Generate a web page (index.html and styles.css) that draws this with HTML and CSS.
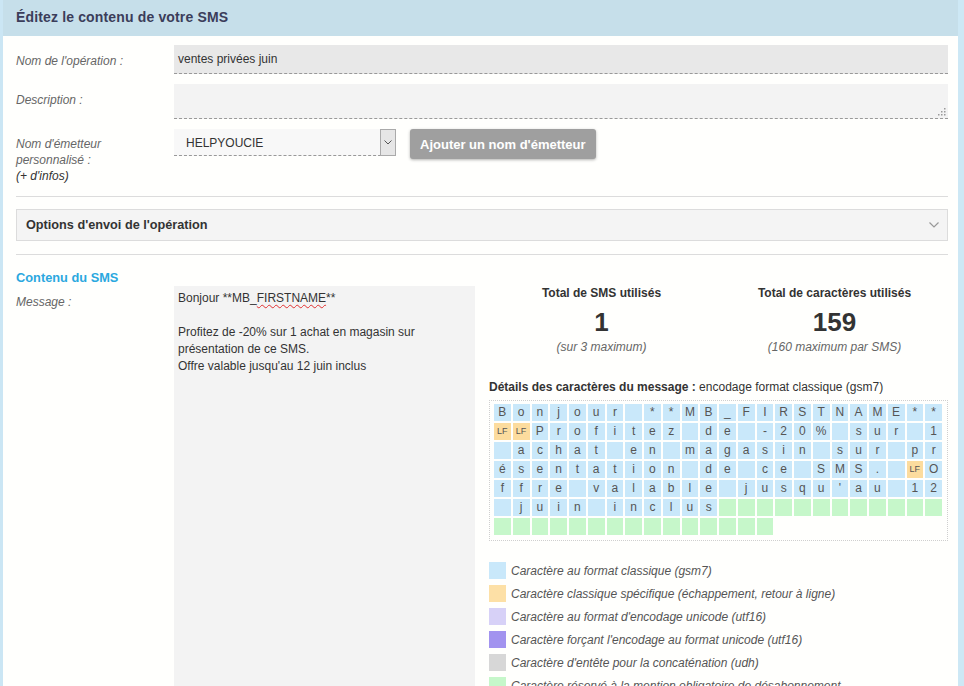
FILE: index.html
```html
<!DOCTYPE html>
<html lang="fr">
<head>
<meta charset="utf-8">
<title>Éditez le contenu de votre SMS</title>
<link rel="stylesheet" href="styles.css">
</head>
<body>
<div class="panel">
  <div class="panel-head">Éditez le contenu de votre SMS</div>
  <div class="panel-body">
    <div class="form-row">
      <div class="lbl">Nom de l'opération :</div>
      <div class="fld input">ventes privées juin</div>
    </div>
    <div class="form-row">
      <div class="lbl">Description :</div>
      <div class="fld textarea">
        <svg class="grip" width="8" height="8" viewBox="0 0 8 8"><g fill="#9a9a9a"><rect x="6" y="0" width="1.5" height="1.5"/><rect x="3" y="3" width="1.5" height="1.5"/><rect x="6" y="3" width="1.5" height="1.5"/><rect x="0" y="6" width="1.5" height="1.5"/><rect x="3" y="6" width="1.5" height="1.5"/><rect x="6" y="6" width="1.5" height="1.5"/></g></svg>
      </div>
    </div>
    <div class="form-row">
      <div class="lbl lbl-multi">Nom d'émetteur<br>personnalisé :<br><span class="infos">(+ d'infos)</span></div>
      <div class="sender">
        <div class="select">
          <span class="select-val">HELPYOUCIE</span>
          <span class="select-arrow"><svg width="8" height="5" viewBox="0 0 8 5"><polyline points="0.5,0.5 4,4 7.5,0.5" fill="none" stroke="#555" stroke-width="1"/></svg></span>
        </div>
        <button class="btn">Ajouter un nom d'émetteur</button>
      </div>
    </div>
    <hr class="sep sep-1">
    <div class="options">
      <span>Options d'envoi de l'opération</span>
      <svg width="10" height="6" viewBox="0 0 10 6"><polyline points="0.5,0.5 5,5 9.5,0.5" fill="none" stroke="#999" stroke-width="1.2"/></svg>
    </div>
    <hr class="sep sep-2">
    <div class="section-title">Contenu du SMS</div>
    <div class="sms-row">
      <div class="lbl lbl-msg">Message :</div>
      <div class="message">Bonjour **MB_<span class="typo">FIRSTNAME</span>**<br><br>Profitez de -20% sur 1 achat en magasin sur présentation de ce SMS.<br>Offre valable jusqu'au 12 juin inclus</div>
      <div class="details">
        <div class="stats">
          <div class="stat">
            <div class="stat-title">Total de SMS utilisés</div>
            <div class="stat-num">1</div>
            <div class="stat-sub">(sur 3 maximum)</div>
          </div>
          <div class="stat">
            <div class="stat-title">Total de caractères utilisés</div>
            <div class="stat-num">159</div>
            <div class="stat-sub">(160 maximum par SMS)</div>
          </div>
        </div>
        <div class="enc"><b>Détails des caractères du message :</b> encodage format classique (gsm7)</div>
        <div class="grid-box">
          <div class="chars">
            <span class="c">B</span><span class="c">o</span><span class="c">n</span><span class="c">j</span><span class="c">o</span><span class="c">u</span><span class="c">r</span><span class="c"></span><span class="c">*</span><span class="c">*</span><span class="c">M</span><span class="c">B</span><span class="c">_</span><span class="c">F</span><span class="c">I</span><span class="c">R</span><span class="c">S</span><span class="c">T</span><span class="c">N</span><span class="c">A</span><span class="c">M</span><span class="c">E</span><span class="c">*</span><span class="c">*</span>
            <span class="c lf">LF</span><span class="c lf">LF</span><span class="c">P</span><span class="c">r</span><span class="c">o</span><span class="c">f</span><span class="c">i</span><span class="c">t</span><span class="c">e</span><span class="c">z</span><span class="c"></span><span class="c">d</span><span class="c">e</span><span class="c"></span><span class="c">-</span><span class="c">2</span><span class="c">0</span><span class="c">%</span><span class="c"></span><span class="c">s</span><span class="c">u</span><span class="c">r</span><span class="c"></span><span class="c">1</span>
            <span class="c"></span><span class="c">a</span><span class="c">c</span><span class="c">h</span><span class="c">a</span><span class="c">t</span><span class="c"></span><span class="c">e</span><span class="c">n</span><span class="c"></span><span class="c">m</span><span class="c">a</span><span class="c">g</span><span class="c">a</span><span class="c">s</span><span class="c">i</span><span class="c">n</span><span class="c"></span><span class="c">s</span><span class="c">u</span><span class="c">r</span><span class="c"></span><span class="c">p</span><span class="c">r</span>
            <span class="c">é</span><span class="c">s</span><span class="c">e</span><span class="c">n</span><span class="c">t</span><span class="c">a</span><span class="c">t</span><span class="c">i</span><span class="c">o</span><span class="c">n</span><span class="c"></span><span class="c">d</span><span class="c">e</span><span class="c"></span><span class="c">c</span><span class="c">e</span><span class="c"></span><span class="c">S</span><span class="c">M</span><span class="c">S</span><span class="c">.</span><span class="c"></span><span class="c lf">LF</span><span class="c">O</span>
            <span class="c">f</span><span class="c">f</span><span class="c">r</span><span class="c">e</span><span class="c"></span><span class="c">v</span><span class="c">a</span><span class="c">l</span><span class="c">a</span><span class="c">b</span><span class="c">l</span><span class="c">e</span><span class="c"></span><span class="c">j</span><span class="c">u</span><span class="c">s</span><span class="c">q</span><span class="c">u</span><span class="c">'</span><span class="c">a</span><span class="c">u</span><span class="c"></span><span class="c">1</span><span class="c">2</span>
            <span class="c"></span><span class="c">j</span><span class="c">u</span><span class="c">i</span><span class="c">n</span><span class="c"></span><span class="c">i</span><span class="c">n</span><span class="c">c</span><span class="c">l</span><span class="c">u</span><span class="c">s</span><span class="c g"></span><span class="c g"></span><span class="c g"></span><span class="c g"></span><span class="c g"></span><span class="c g"></span><span class="c g"></span><span class="c g"></span><span class="c g"></span><span class="c g"></span><span class="c g"></span><span class="c g"></span>
            <span class="c g"></span><span class="c g"></span><span class="c g"></span><span class="c g"></span><span class="c g"></span><span class="c g"></span><span class="c g"></span><span class="c g"></span><span class="c g"></span><span class="c g"></span><span class="c g"></span><span class="c g"></span><span class="c g"></span><span class="c g"></span><span class="c g"></span>
          </div>
        </div>
        <ul class="legend">
          <li><span class="sq sq-blue"></span>Caractère au format classique (gsm7)</li>
          <li><span class="sq sq-orange"></span>Caractère classique spécifique (échappement, retour à ligne)</li>
          <li><span class="sq sq-lilac"></span>Caractère au format d'encodage unicode (utf16)</li>
          <li><span class="sq sq-purple"></span>Caractère forçant l'encodage au format unicode (utf16)</li>
          <li><span class="sq sq-gray"></span>Caractère d'entête pour la concaténation (udh)</li>
          <li><span class="sq sq-green"></span>Caractère réservé à la mention obligatoire de désabonnement</li>
        </ul>
      </div>
    </div>
  </div>
</div>
</body>
</html>
```
FILE: styles.css
```css
html, body {
  margin: 0;
  padding: 0;
  overflow: hidden;
  background: #ffffff;
}
body {
  font-family: "Liberation Sans", Arial, sans-serif;
  font-size: 12px;
  color: #333;
}
.panel {
  border-left: 3px solid #cbe6f4;
  border-right: 6px solid #cde8f5;
  min-height: 686px;
  background: #fffffd;
}
.panel-head {
  height: 36px;
  line-height: 34px;
  background: #c6dfea;
  padding-left: 13px;
  font-size: 14px;
  font-weight: bold;
  color: #3b3d5a;
  letter-spacing: 0.15px;
}
.panel-body {
  padding: 9px 10px 0 13px;
}
.form-row {
  display: flex;
  margin-bottom: 10px;
}
.lbl {
  width: 158px;
  flex: none;
  font-style: italic;
  color: #666;
  line-height: 16px;
  padding-top: 8px;
}
.lbl-multi {
  padding-top: 7px;
}
.infos {
  color: #333;
}
.fld {
  flex: 1;
  box-sizing: border-box;
  border-bottom: 1px dashed #999;
}
.input {
  height: 29px;
  background: #e8e8e8;
  padding-left: 4px;
  line-height: 29px;
  color: #333;
}
.textarea {
  height: 35px;
  background: #f3f3f3;
  display: flex;
  justify-content: flex-end;
  align-items: flex-end;
  padding: 0 2px 2px 0;
}
.grip {
  display: block;
}
.sender {
  display: flex;
  align-items: flex-start;
  gap: 14px;
}
.select {
  width: 222px;
  height: 27px;
  box-sizing: border-box;
  display: flex;
  align-items: stretch;
  background: #f8f8f8;
  border-bottom: 1px dashed #999;
}
.select-val {
  flex: 1;
  padding-left: 12px;
  line-height: 28px;
  color: #333;
}
.select-arrow {
  width: 16px;
  box-sizing: border-box;
  border: 1px solid #aaa;
  background: #e6e6e6;
  display: flex;
  align-items: center;
  justify-content: center;
  margin-bottom: -1px;
}
.btn {
  height: 30px;
  padding: 0 10px;
  border: none;
  border-radius: 3px;
  background: #9f9f9f;
  color: #fff;
  font-family: "Liberation Sans", Arial, sans-serif;
  font-size: 13px;
  font-weight: bold;
  box-shadow: 0 1px 3px rgba(0,0,0,0.3);
}
.sep {
  border: none;
  border-top: 1px solid #dcdcdc;
  margin: 0;
}
.sep-1 {
  margin-top: 12px;
}
.options {
  margin-top: 12px;
  height: 32px;
  box-sizing: border-box;
  border: 1px solid #dcdcdc;
  background: #f4f4f4;
  display: flex;
  align-items: center;
  justify-content: space-between;
  padding: 0 8px 0 9px;
  font-size: 12.7px;
  font-weight: bold;
  color: #333;
}
.sep-2 {
  margin-top: 13px;
}
.section-title {
  margin-top: 15px;
  line-height: 16px;
  font-size: 12.8px;
  font-weight: bold;
  color: #2ba8df;
}
.sms-row {
  display: flex;
  margin-top: 0;
}
.lbl-msg {
  padding-top: 8px;
}
.message {
  width: 301px;
  flex: none;
  height: 420px;
  box-sizing: border-box;
  background: #f3f3f3;
  padding: 4px 4px;
  line-height: 17px;
  color: #333;
}
.typo {
  text-decoration: underline wavy #e03030;
  text-decoration-thickness: 1px;
  text-underline-offset: 2px;
}
.details {
  margin-left: 14px;
  flex: 1;
  min-width: 0;
}
.stats {
  display: grid;
  grid-template-columns: 233px 233px;
  margin-left: -4px;
  text-align: center;
}
.stat-title {
  font-weight: bold;
  line-height: 14px;
}
.stat-num {
  margin-top: 7px;
  font-size: 26px;
  font-weight: bold;
  line-height: 30px;
  color: #333;
}
.stat-sub {
  margin-top: 3px;
  font-style: italic;
  color: #666;
  line-height: 14px;
}
.enc {
  margin-top: 26px;
  line-height: 14px;
}
.grid-box {
  margin-top: 6px;
  border: 1px dotted #cfcfcf;
  padding: 3px 5px 5px 4px;
}
.chars {
  display: grid;
  grid-template-columns: repeat(24, 1fr);
  grid-auto-rows: 17px;
  gap: 2px 2px;
}
.c {
  background: #c9e8fa;
  color: #555;
  text-align: center;
  line-height: 17px;
  font-size: 12px;
}
.c.lf {
  background: #fcdc9e;
  font-size: 9px;
}
.c.g {
  background: #c6f7ca;
}
.legend {
  list-style: none;
  margin: 21px 0 0;
  padding: 0;
}
.legend li {
  display: flex;
  align-items: center;
  height: 17px;
  margin-bottom: 6px;
  font-style: italic;
  color: #555;
}
.sq {
  width: 17px;
  height: 17px;
  margin-right: 5px;
  flex: none;
}
.sq-blue { background: #c9e8fa; }
.sq-orange { background: #fde0a6; }
.sq-lilac { background: #d7d1f7; }
.sq-purple { background: #a293ef; }
.sq-gray { background: #d7d7d7; }
.sq-green { background: #c6f7ca; }
```
